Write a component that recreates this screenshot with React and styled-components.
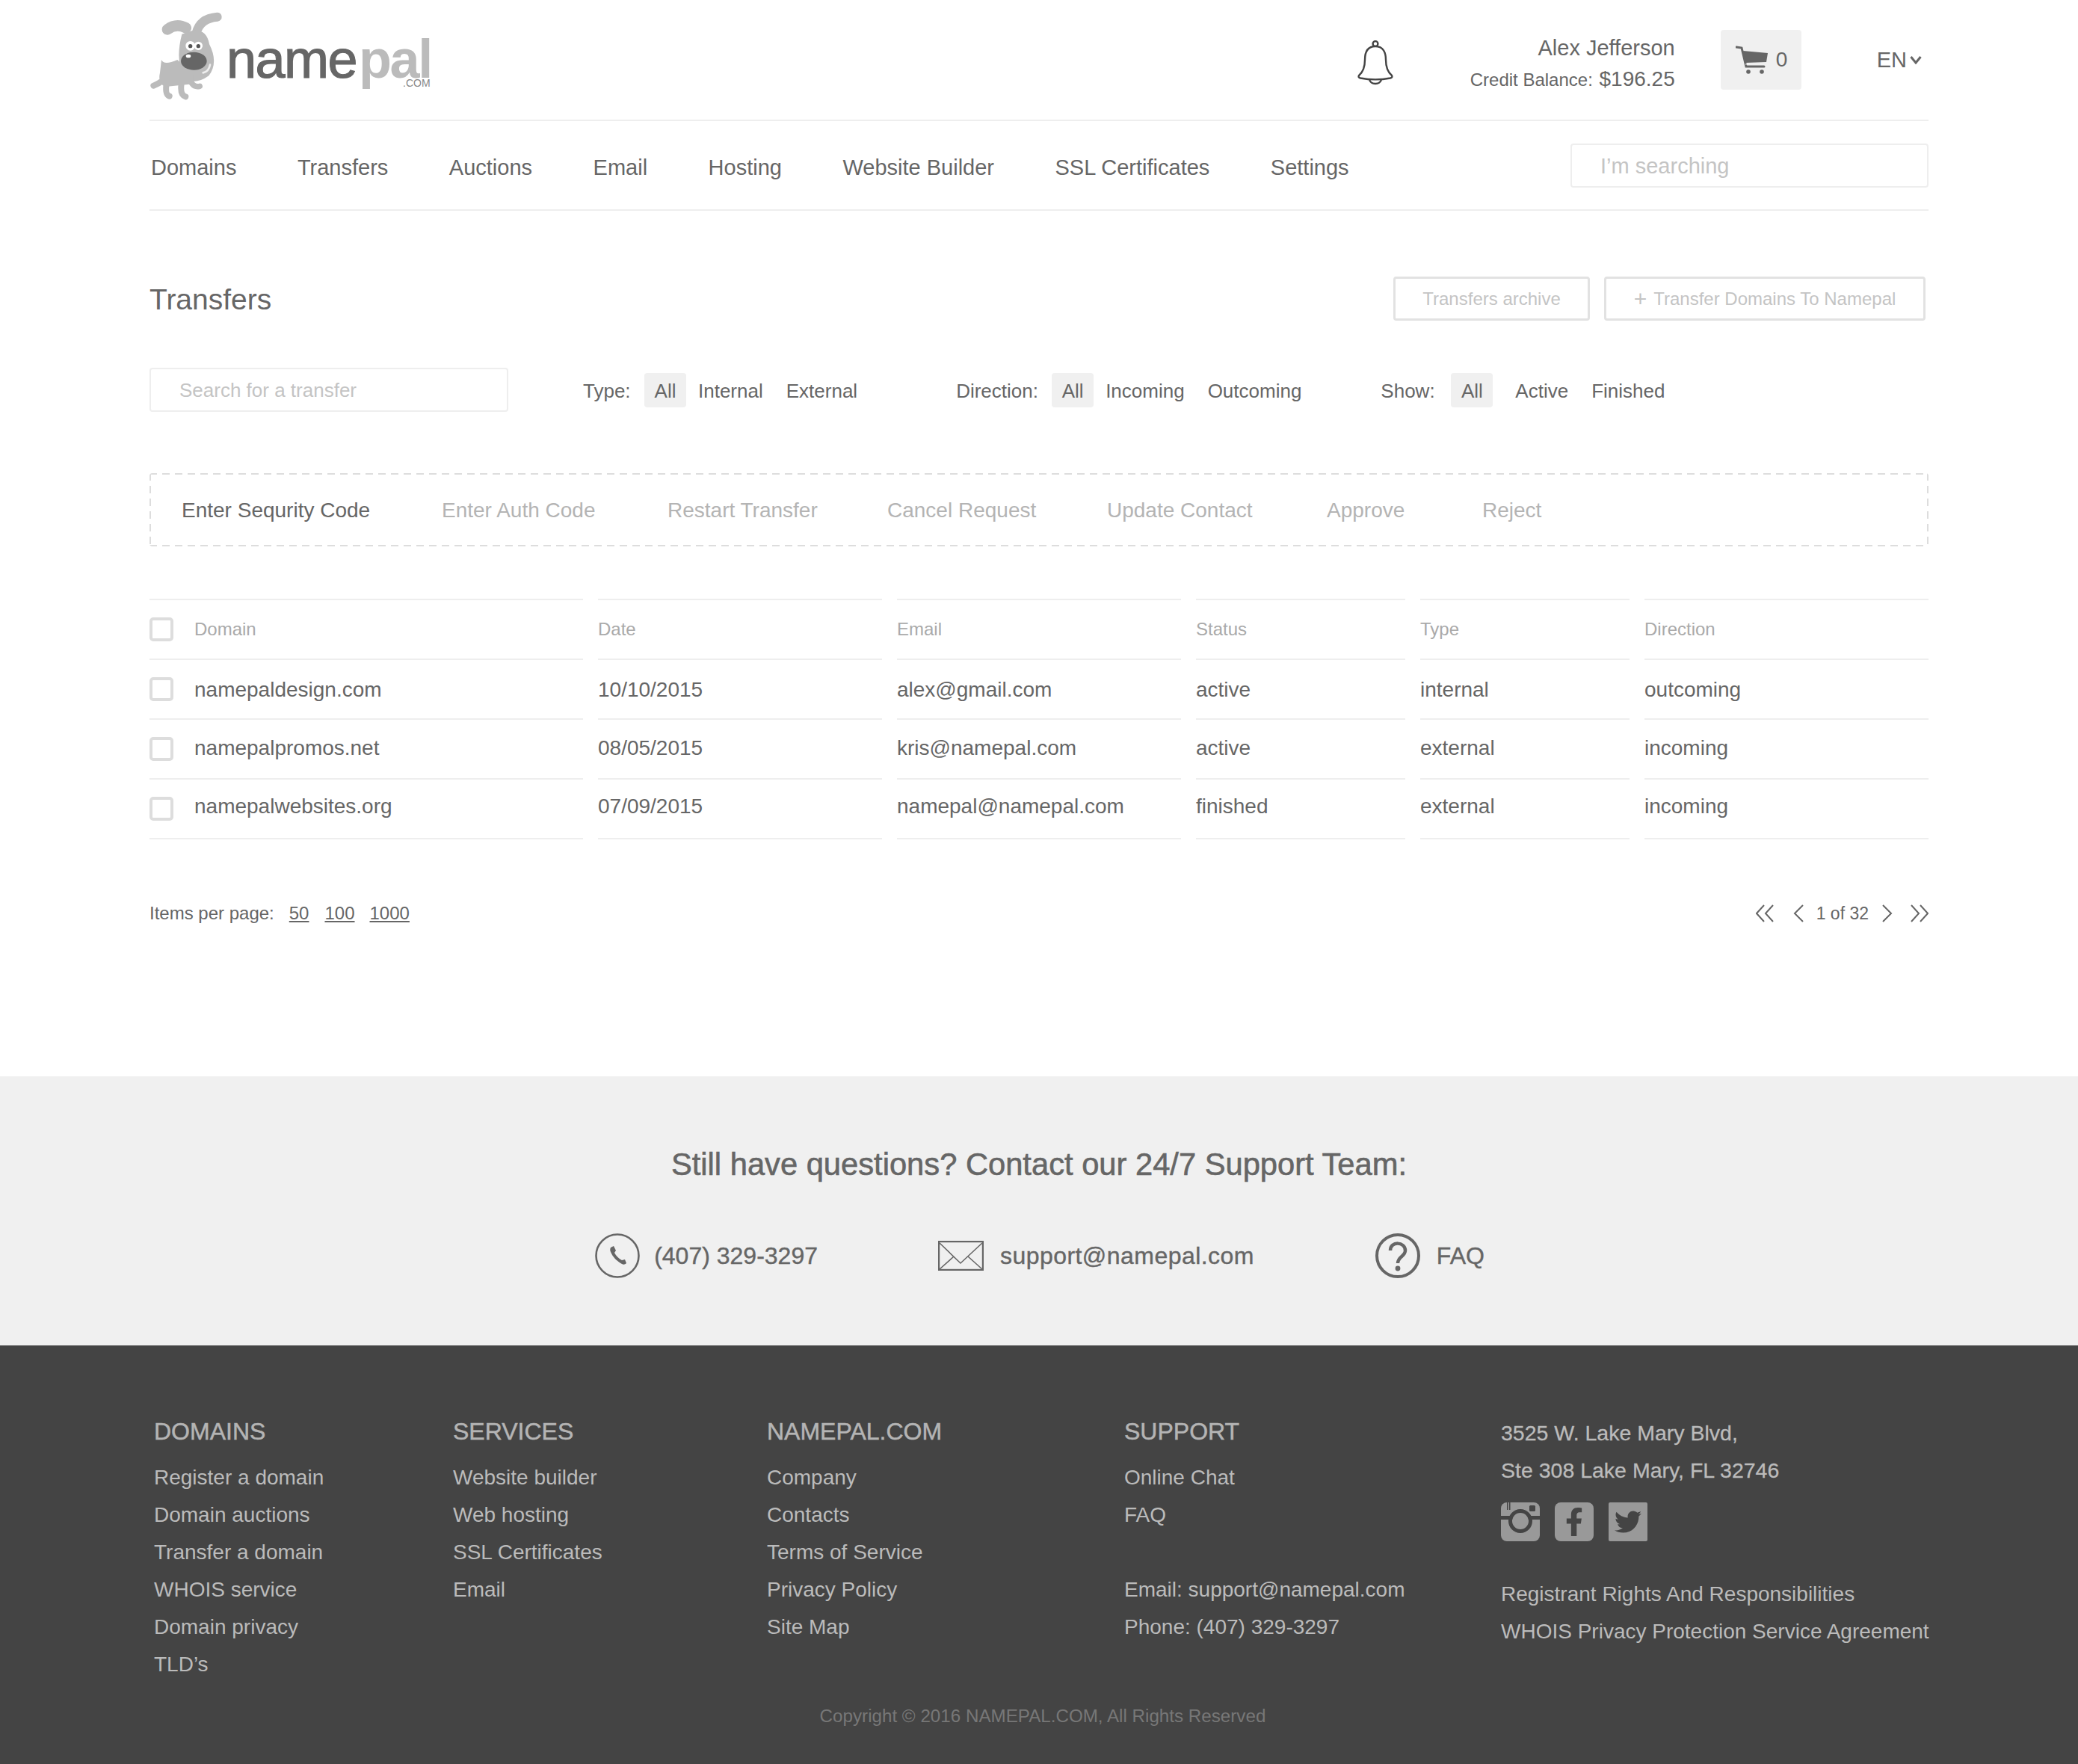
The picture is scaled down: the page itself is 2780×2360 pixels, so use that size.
import React from "react";
import styled, { createGlobalStyle } from "styled-components";
import { FaFacebookF, FaTwitter } from "react-icons/fa";

const Global = createGlobalStyle`
  html, body { margin: 0; padding: 0; background: #fff; }
  body { font-family: "Liberation Sans", Arial, sans-serif; color: #666; }
  * { box-sizing: border-box; }
`;

const Container = styled.div`width: 2380px; margin: 0 auto;`;
const HeaderBar = styled.header`
  display: flex; height: 162px; border-bottom: 2px solid #eee; align-items: flex-start; padding-right: 9px;
`;
const LogoWrap = styled.div`display: flex; align-items: flex-start; margin-top: 14px; width: 380px;`;
const LogoWord = styled.div`
  position: relative; margin: 29px 0 0 3px; font-size: 72px; line-height: 72px; letter-spacing: -1.5px; color: #666; -webkit-text-stroke: 1.2px #666;
`;
const LogoPal = styled.span`margin-left: 3px; color: #bbb; font-weight: 700; letter-spacing: -2.5px; -webkit-text-stroke: 0;`;
const LogoCom = styled.span`
  position: absolute; right: 1px; bottom: -3px; font-size: 14px; line-height: 14px; letter-spacing: 0; color: #888; -webkit-text-stroke: 0;
`;
const BellWrap = styled.div`margin: 54px 0 0 auto; width: 48px; height: 60px;`;
const User = styled.div`width: 377px; margin-top: 44px; text-align: right;`;
const UserName = styled.div`font-size: 29px; line-height: 40px; color: #666;`;
const Credit = styled.div`font-size: 24px; line-height: 40px; margin-top: 2px;`;
const Amount = styled.span`font-size: 28px; margin-left: 2px;`;
const CartButton = styled.div`
  display: flex; align-items: center; margin: 40px 0 0 61px; width: 108px; height: 80px; padding-left: 20px; gap: 10px;
  background: #f0f0f0; border-radius: 4px; font-size: 28px;
`;
const Lang = styled.div`
  display: flex; align-items: center; gap: 4px; margin: 60px 0 0 101px; font-size: 29px; line-height: 40px;
`;
const NavBar = styled.nav`
  display: flex; align-items: center; height: 120px; border-bottom: 2px solid #eee; padding-left: 2px; gap: 81.5px;
`;
const NavItem = styled.a`font-size: 29px; color: #666; padding-top: 6px;`;
const TextBox = styled.div`
  display: flex; align-items: center; width: ${p => p.$w}px; height: 59px; padding: 2px 0 0 ${p => p.$pad}px;
  border: 2px solid #eee; border-radius: 4px; color: #c4c4c4; font-size: ${p => p.$size}px;
`;
const NavSearch = styled(TextBox)`margin-left: auto;`;
const TitleRow = styled.div`display: flex; align-items: center; height: 59px; margin-top: 88px; padding-right: 4px;`;
const Title = styled.h1`margin: 0; padding-top: 2px; font-size: 39px; font-weight: 400; color: #666;`;
const Actions = styled.div`display: flex; gap: 19px; margin-left: auto;`;
const OutlineButton = styled.button`
  display: flex; align-items: center; justify-content: center; gap: 9px; height: 59px; width: ${p => p.$w}px; padding: 0;
  background: #fff; border: 3px solid #e2e2e2; border-radius: 4px; font: 24px "Liberation Sans", Arial, sans-serif; color: #c4c4c4;
`;
const PlusMark = styled.span`font-size: 30px; font-weight: 400; line-height: 30px;`;
const FilterRow = styled.div`display: flex; align-items: center; margin-top: 63px;`;
const FilterGroup = styled.div`
  display: flex; align-items: center; margin-left: ${p => p.$ml}px; font-size: 26px; color: #666;
`;
const FilterLabel = styled.span`width: ${p => p.$w}px; padding-top: 3px;`;
const Pill = styled.span`
  display: flex; align-items: center; justify-content: center; width: 56px; height: 46px; padding-top: 3px; background: #f0f0f0; border-radius: 4px;
`;
const FilterOption = styled.span`margin-left: ${p => p.$ml}px; padding-top: 3px;`;
const ActionBar = styled.div`
  display: flex; align-items: center; height: 98px; margin-top: 82px; padding: 2px 0 0 43px;
  font-size: 28px; border-radius: 4px;
  background:
    repeating-linear-gradient(to right, #ddd 0 10px, transparent 10px 17px) top left / 100% 2px no-repeat,
    repeating-linear-gradient(to right, #ddd 0 10px, transparent 10px 17px) bottom left / 100% 2px no-repeat,
    repeating-linear-gradient(to bottom, #ddd 0 10px, transparent 10px 17px) top left / 2px 100% no-repeat,
    repeating-linear-gradient(to bottom, #ddd 0 10px, transparent 10px 17px) top right / 2px 100% no-repeat;
`;
const ActionItem = styled.span`
  width: ${p => p.$w}px; color: ${p => (p.$on ? "#666" : "#b4b4b4")};
`;
const TableGrid = styled.div`
  display: grid; grid-template-columns: 580px 380px 380px 280px 280px 1fr; column-gap: 20px; margin-top: 70px;
`;
const Cell = styled.div`
  display: flex; align-items: center; height: 80px; border-bottom: 2px solid #eee; font-size: 28px; color: #666;
`;
const HeadCell = styled(Cell)`
  height: 82px; border-top: 2px solid #eee; font-size: 24px; color: #aaa;
`;
const CellText = styled.span`padding-top: 2px; margin-bottom: ${p => p.$row * 4}px;`;
const Check = styled.span`
  flex: none; width: 32px; height: 32px; margin-right: 28px; border: 4px solid #ddd; border-radius: 5px;
`;
const PagerRow = styled.div`display: flex; align-items: center; height: 40px; margin-top: 79px; font-size: 24px; color: #666;`;
const PerPage = styled.a`margin-left: ${p => p.$ml}px; text-decoration: underline;`;
const Pager = styled.div`display: flex; align-items: center; margin-left: auto; font-size: 23px;`;
const PagerIcon = styled.svg`flex: none; margin-left: ${p => p.$ml}px; fill: none; stroke: #666; stroke-width: 2;`;
const PagerText = styled.span`margin-left: 17px;`;
const Main = styled.main`padding-bottom: 198px;`;
const Support = styled.section`
  height: 360px; padding-top: 95px; background: #f0f0f0; text-align: center;
`;
const SupportTitle = styled.h2`
  margin: 0; font-size: 41.7px; line-height: 46px; font-weight: 400; color: #666; -webkit-text-stroke: 0.6px #666;
`;
const ContactRow = styled.div`display: flex; justify-content: center; align-items: center; margin-top: 68px; padding-left: 2px; height: 62px;`;
const Contact = styled.a`
  display: flex; align-items: center; margin-left: ${p => p.$ml}px; gap: ${p => p.$gap}px; font-size: 32px; color: #666;
  letter-spacing: ${p => p.$track}px; -webkit-text-stroke: 0.4px #666;
`;
const Footer = styled.footer`height: 560px; background: #444; color: #bbb; padding-top: 90px;`;
const FooterGrid = styled.div`
  display: grid; grid-template-columns: 400px 420px 478px 504px 1fr; padding-left: 6px; font-size: 28px; line-height: 50px;
`;
const FooterHead = styled.h3`
  margin: 0 0 12px; font-size: 32px; line-height: 50px; font-weight: 400; color: #b4b4b4; -webkit-text-stroke: 0.5px #b4b4b4;
`;
const FooterLink = styled.div`min-height: 50px; white-space: nowrap;`;
const Address = styled.div`padding-top: 2px; font-size: 28.5px; -webkit-text-stroke: 0.3px #bbb; white-space: nowrap;`;
const Socials = styled.div`display: flex; gap: 20px; margin: 18px 0 46px;`;
const Tile = styled.span`
  display: flex; align-items: center; justify-content: center; width: 52px; height: 52px; background: #999; color: #444;
  border-radius: ${p => p.$r}px; overflow: hidden; font-size: ${p => p.$size}px;
`;
const Copyright = styled.div`margin-top: 24px; padding-left: 10px; text-align: center; font-size: 24.2px; line-height: 40px; color: #777;`;

const Dog = () => (
  <svg width="100" height="120" viewBox="60 40 300 360" aria-hidden="true">
    <g fill="none" stroke="#bbb" strokeLinecap="round" strokeLinejoin="round">
      <path d="M132 116 Q168 90 206 110" strokeWidth="44" />
      <path d="M248 130 Q262 72 332 66" strokeWidth="36" />
      <path d="M112 322 Q95 335 76 342" strokeWidth="24" />
      <path d="M128 335 Q122 378 140 384" strokeWidth="24" />
      <path d="M188 335 Q182 380 205 386" strokeWidth="24" />
      <path d="M225 325 Q238 350 262 344" strokeWidth="22" />
    </g>
    <path fill="#bbb" d="M190 135 Q285 92 300 175 Q338 250 298 302 Q250 337 205 318 Q160 250 190 135Z" />
    <path fill="#bbb" d="M108 238 Q118 262 172 238 L235 300 L235 335 L125 346 Q92 335 102 290Z" />
    <circle cx="224" cy="182" r="19" fill="#fff" /><circle cx="256" cy="182" r="17" fill="#fff" />
    <circle cx="224" cy="183" r="8" fill="#555" /><circle cx="256" cy="183" r="8" fill="#555" />
    <ellipse cx="238" cy="243" rx="52" ry="36" fill="#666" />
    <ellipse cx="216" cy="223" rx="10" ry="7" fill="#fff" />
    <path d="M275 290 Q298 285 303 258" fill="none" stroke="#eee" strokeWidth="8" strokeLinecap="round" />
  </svg>
);

const Bell = () => (
  <svg width="48" height="60" viewBox="0 0 48 60" fill="none" stroke="#444" strokeWidth="2.4" strokeLinejoin="round" aria-hidden="true">
    <circle cx="24" cy="4.5" r="3.4" />
    <path d="M24 8 C13 8 10 17 10 26 C10 36 8 42 2 47 C1 49 2 50 4 50.5 C17 53 31 53 44 50.5 C46 50 47 49 46 47 C40 42 38 36 38 26 C38 17 35 8 24 8Z" />
    <path d="M16 52 C17 60 31 60 32 52" />
  </svg>
);

const Cart = () => (
  <svg width="44" height="40" viewBox="0 0 44 40" aria-hidden="true">
    <path d="M1 3 L8 4 L14 29 L38 29" fill="none" stroke="#666" strokeWidth="3" strokeLinecap="round" />
    <path d="M10 8 L43 11 L41 23 L13 24Z" fill="#666" />
    <rect x="13" y="25.5" width="26" height="1" fill="#f0f0f0" />
    <circle cx="17" cy="36" r="2.8" fill="#666" /><circle cx="35" cy="36" r="2.8" fill="#666" />
  </svg>
);

const Chev = () => (
  <svg width="16" height="12" viewBox="0 0 16 12" fill="none" stroke="#666" strokeWidth="3" aria-hidden="true">
    <path d="M1.5 2 L8 10 L14.5 2" />
  </svg>
);

const PageIcon = ({ d, w, ml }) => (
  <PagerIcon $ml={ml} width={w} height="24" viewBox={`0 0 ${w} 24`} aria-hidden="true">
    <path d={d} />
  </PagerIcon>
);

const PhoneIcon = () => (
  <svg width="60" height="62" viewBox="0 0 60 62" aria-hidden="true">
    <circle cx="30" cy="31" r="28.5" fill="none" stroke="#666" strokeWidth="2.6" />
    <path d="M21 20 C20 22 20 24 21 26 C24 33 29 38 36 42 C38 43 40 43 42 41 L40 36 L36 37 C32 35 28 31 26 27 L28 24 L25 18 Z" fill="#666" />
  </svg>
);

const MailIcon = () => (
  <svg width="61" height="40" viewBox="0 0 61 40" fill="none" stroke="#666" aria-hidden="true">
    <rect x="1" y="1" width="59" height="38" strokeWidth="2.4" />
    <path d="M2 3 L30 30 L59 3 M2 38 L21 21 M59 38 L40 21" strokeWidth="1.6" />
  </svg>
);

const HelpIcon = () => (
  <svg width="60" height="62" viewBox="0 0 60 62" fill="none" stroke="#666" aria-hidden="true">
    <circle cx="30" cy="31" r="28" strokeWidth="4" />
    <path d="M20 24 C20 11 40 12 40 24 C40 32 30 32 30 41" strokeWidth="4.5" />
    <circle cx="30" cy="48" r="3.4" fill="#666" stroke="none" />
  </svg>
);

const InstaIcon = () => (
  <svg width="52" height="52" viewBox="0 0 52 52" aria-hidden="true">
    <rect x="0" y="18" width="52" height="5" fill="#444" />
    <circle cx="26" cy="25" r="15" fill="#999" />
    <circle cx="26" cy="25" r="13.5" fill="none" stroke="#444" strokeWidth="5" />
    <rect x="38" y="4" width="8" height="8" rx="1.5" fill="#444" />
    <rect x="8" y="0" width="1.5" height="10" fill="#444" /><rect x="11" y="0" width="1.5" height="10" fill="#444" />
  </svg>
);

const NAV = ["Domains", "Transfers", "Auctions", "Email", "Hosting", "Website Builder", "SSL Certificates", "Settings"];
const ACTIONS = [
  ["Enter Sequrity Code", 348, true], ["Enter Auth Code", 302], ["Restart Transfer", 294], ["Cancel Request", 294],
  ["Update Contact", 294], ["Approve", 208], ["Reject", 100],
];
const HEAD = ["Date", "Email", "Status", "Type", "Direction"];
const ROWS = [
  ["namepaldesign.com", "10/10/2015", "alex@gmail.com", "active", "internal", "outcoming"],
  ["namepalpromos.net", "08/05/2015", "kris@namepal.com", "active", "external", "incoming"],
  ["namepalwebsites.org", "07/09/2015", "namepal@namepal.com", "finished", "external", "incoming"],
];
const FOOT = [
  ["DOMAINS", ["Register a domain", "Domain auctions", "Transfer a domain", "WHOIS service", "Domain privacy", "TLD’s"]],
  ["SERVICES", ["Website builder", "Web hosting", "SSL Certificates", "Email"]],
  ["NAMEPAL.COM", ["Company", "Contacts", "Terms of Service", "Privacy Policy", "Site Map"]],
  ["SUPPORT", ["Online Chat", "FAQ", "", "Email: support@namepal.com", "Phone: (407) 329-3297"]],
];

export default function App() {
  return (
    <>
      <Global />
      <Main>
        <Container>
          <HeaderBar>
            <LogoWrap>
              <Dog />
              <LogoWord>name<LogoPal>pal</LogoPal><LogoCom>.COM</LogoCom></LogoWord>
            </LogoWrap>
            <BellWrap><Bell /></BellWrap>
            <User>
              <UserName>Alex Jefferson</UserName>
              <Credit>Credit Balance: <Amount>$196.25</Amount></Credit>
            </User>
            <CartButton><Cart /> 0</CartButton>
            <Lang>EN <Chev /></Lang>
          </HeaderBar>
          <NavBar>
            {NAV.map(n => <NavItem key={n}>{n}</NavItem>)}
            <NavSearch $w={479} $pad={38} $size={29}>I’m searching</NavSearch>
          </NavBar>
          <TitleRow>
            <Title>Transfers</Title>
            <Actions>
              <OutlineButton $w={263}>Transfers archive</OutlineButton>
              <OutlineButton $w={430}><PlusMark>+</PlusMark>Transfer Domains To Namepal</OutlineButton>
            </Actions>
          </TitleRow>
          <FilterRow>
            <TextBox $w={480} $pad={38} $size={26}>Search for a transfer</TextBox>
            <FilterGroup $ml={100}>
              <FilterLabel $w={82}>Type:</FilterLabel><Pill>All</Pill>
              <FilterOption $ml={16}>Internal</FilterOption><FilterOption $ml={31}>External</FilterOption>
            </FilterGroup>
            <FilterGroup $ml={132}>
              <FilterLabel $w={128}>Direction:</FilterLabel><Pill>All</Pill>
              <FilterOption $ml={16}>Incoming</FilterOption><FilterOption $ml={31}>Outcoming</FilterOption>
            </FilterGroup>
            <FilterGroup $ml={106}>
              <FilterLabel $w={94}>Show:</FilterLabel><Pill>All</Pill>
              <FilterOption $ml={30}>Active</FilterOption><FilterOption $ml={31}>Finished</FilterOption>
            </FilterGroup>
          </FilterRow>
          <ActionBar>
            {ACTIONS.map(([t, w, on]) => <ActionItem key={t} $w={w} $on={on}>{t}</ActionItem>)}
          </ActionBar>
          <TableGrid>
            <HeadCell><Check />Domain</HeadCell>
            {HEAD.map(h => <HeadCell key={h}>{h}</HeadCell>)}
            {ROWS.map((r, ri) => r.map((c, i) => (
              <Cell key={c + i}>{i === 0 && <Check />}<CellText $row={ri}>{c}</CellText></Cell>
            )))}
          </TableGrid>
          <PagerRow>
            Items per page:
            <PerPage $ml={20}>50</PerPage><PerPage $ml={21}>100</PerPage><PerPage $ml={20}>1000</PerPage>
            <Pager>
              <PageIcon ml={0} w={24} d="M11 1 L1 12 L11 23 M23 1 L13 12 L23 23" />
              <PageIcon ml={26} w={14} d="M13 1 L2 12 L13 23" />
              <PagerText>1 of 32</PagerText>
              <PageIcon ml={18} w={14} d="M1 1 L12 12 L1 23" />
              <PageIcon ml={24} w={24} d="M1 1 L11 12 L1 23 M13 1 L23 12 L13 23" />
            </Pager>
          </PagerRow>
        </Container>
      </Main>
      <Support>
        <SupportTitle>Still have questions? Contact our 24/7 Support Team:</SupportTitle>
        <ContactRow>
          <Contact $ml={0} $gap={19} $track={0}><PhoneIcon />(407) 329-3297</Contact>
          <Contact $ml={161} $gap={22} $track={0.45}><MailIcon />support@namepal.com</Contact>
          <Contact $ml={162} $gap={22} $track={0}><HelpIcon />FAQ</Contact>
        </ContactRow>
      </Support>
      <Footer>
        <Container>
          <FooterGrid>
            {FOOT.map(([h, links]) => (
              <div key={h}>
                <FooterHead>{h}</FooterHead>
                {links.map((l, i) => <FooterLink key={i}>{l}</FooterLink>)}
              </div>
            ))}
            <div>
              <Address>3525 W. Lake Mary Blvd,<br />Ste 308 Lake Mary, FL 32746</Address>
              <Socials>
                <Tile $r={8}><InstaIcon /></Tile>
                <Tile $r={8} $size={38}><FaFacebookF /></Tile>
                <Tile $r={2} $size={36}><FaTwitter /></Tile>
              </Socials>
              <FooterLink>Registrant Rights And Responsibilities</FooterLink>
              <FooterLink>WHOIS Privacy Protection Service Agreement</FooterLink>
            </div>
          </FooterGrid>
          <Copyright>Copyright © 2016 NAMEPAL.COM, All Rights Reserved</Copyright>
        </Container>
      </Footer>
    </>
  );
}
